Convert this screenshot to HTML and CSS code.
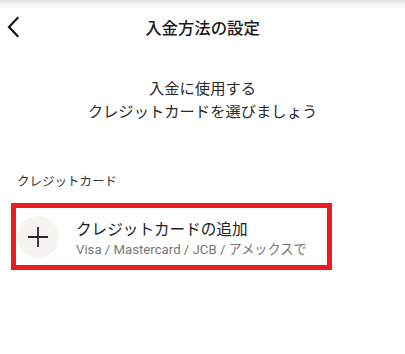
FILE: index.html
```html
<!DOCTYPE html>
<html lang="ja">
<head>
<meta charset="utf-8">
<link rel="stylesheet" href="styles.css">
</head>
<body>
<header class="header">
  <button class="back" aria-label="戻る">
    <svg width="14" height="22" viewBox="0 0 14 22"><path d="M11.5 2 L3 11 L11.5 20" fill="none" stroke="#111" stroke-width="2.2" stroke-linecap="square" stroke-linejoin="miter"/></svg>
  </button>
  <h1 class="title">入金方法の設定</h1>
  <span class="spacer"></span>
</header>
<main>
  <p class="intro">入金に使用する<br>クレジットカードを選びましょう</p>
  <div class="section-label">クレジットカード</div>
  <div class="card">
    <div class="plus-circle">
      <svg width="22" height="22" viewBox="0 0 22 22"><path d="M11 1 V21 M1 11 H21" stroke="#2a2a2a" stroke-width="1.8" fill="none"/></svg>
    </div>
    <div class="card-text">
      <div class="card-title">クレジットカードの追加</div>
      <div class="card-sub">Visa / Mastercard / JCB / アメックスで</div>
    </div>
  </div>
</main>
</body>
</html>
```
FILE: styles.css
```css
html, body {
  margin: 0;
  padding: 0;
  background: #fff;
}
body {
  font-family: "Noto Sans CJK JP", "Noto Sans", sans-serif;
  color: #222;
  width: 405px;
}
.header {
  height: 52px;
  display: grid;
  grid-template-columns: 44px 1fr 44px;
  align-items: center;
  background: linear-gradient(to bottom, #e2e2e2 0px, #f6f6f6 5px, #ffffff 9px);
}
.back {
  border: 0;
  background: none;
  padding: 0 0 0 6px;
  height: 52px;
  display: flex;
  align-items: center;
  padding-top: 2px;
}
.title {
  margin: 0;
  text-align: center;
  font-size: 16.4px;
  font-weight: 500;
  color: #1a1a1a;
  line-height: 22px;
  padding-top: 2px;
}
.intro {
  margin: 0;
  padding-top: 24px;
  text-align: center;
  font-size: 15.3px;
  line-height: 23px;
  color: #2a2a2a;
}
.section-label {
  margin-top: 50px;
  padding-left: 17px;
  font-size: 12.5px;
  line-height: 18px;
  color: #333;
}
.card {
  margin: 13px 0 0 11px;
  width: 310px;
  height: 57px;
  border: 5px solid #ed1c24;
  display: flex;
  align-items: center;
  gap: 17px;
  padding-left: 1px;
}
.plus-circle {
  width: 42px;
  height: 42px;
  border-radius: 50%;
  background: #f6f4f0;
  display: flex;
  align-items: center;
  justify-content: center;
  flex: none;
}
.card-text {
  display: flex;
  flex-direction: column;
  padding-top: 4px;
}
.card-title {
  font-size: 15.6px;
  line-height: 22px;
  color: #222;
}
.card-sub {
  font-family: Roboto, "Noto Sans CJK JP", sans-serif;
  font-size: 13.2px;
  line-height: 21px;
  color: #777;
}
```
